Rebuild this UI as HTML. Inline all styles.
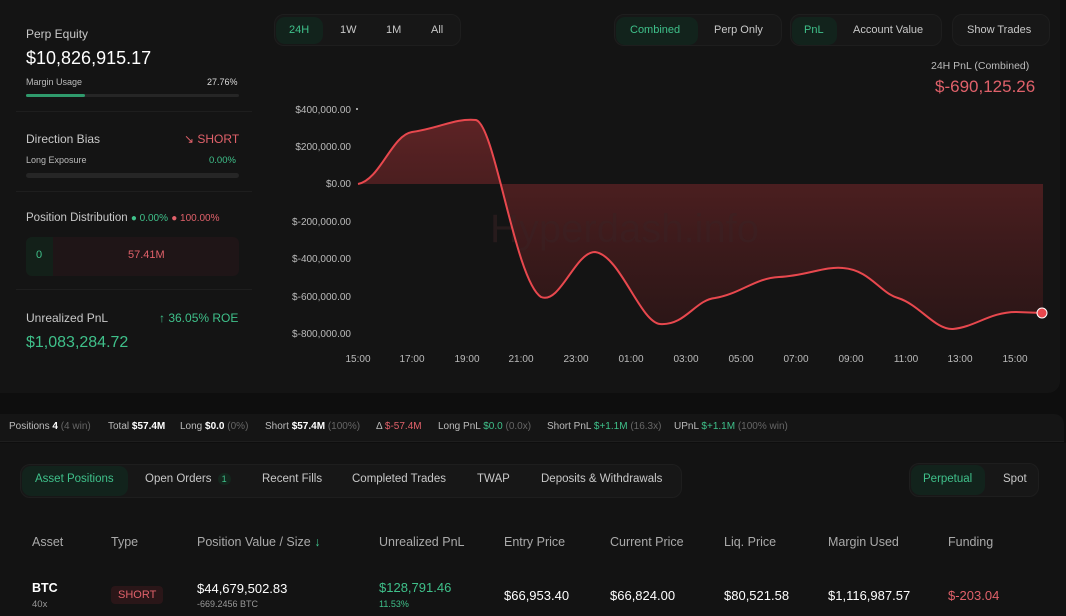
<!DOCTYPE html>
<html><head><meta charset="utf-8"><style>
*{box-sizing:border-box;margin:0;padding:0}
body{width:1066px;height:616px;overflow:hidden;background:#0e0e0e;font-family:"Liberation Sans",sans-serif;color:#e8e8e8;position:relative}
.a{position:absolute;white-space:nowrap}
.g{color:#3fc08a}.r{color:#e0616a}.m{color:#666}
.card{position:absolute;left:0;top:0;width:1060px;height:393px;background:#141414;border-radius:0 0 12px 0}
.seg{position:absolute;height:32px;background:#171717;border:1px solid #1e1e1e;border-radius:10px}
.on{position:absolute;background:#12231c;border-radius:9px;color:#3fc08a}
.lbl{font-size:11px;color:#c8c8c8}
.sb{position:absolute;top:421px;font-size:10px;color:#bbb;white-space:nowrap}
.sb b{color:#fff}
</style></head><body>
<div class="card"></div>
<div class="a" style="left:26px;top:27px;font-size:12px;color:#c8c8c8">Perp Equity</div>
<div class="a" style="left:26px;top:48px;font-size:18px;color:#fff">$10,826,915.17</div>
<div class="a" style="left:26px;top:77px;font-size:9px;color:#bbb">Margin Usage</div>
<div class="a" style="left:207px;top:77px;font-size:9px;color:#ddd">27.76%</div>
<div class="a" style="left:26px;top:94px;width:213px;height:3px;background:#262626;border-radius:2px"></div>
<div class="a" style="left:26px;top:94px;width:59px;height:3px;background:#2f9a6c;border-radius:2px"></div>
<div class="a" style="left:16px;top:111px;width:236px;height:1px;background:#1e1e1e"></div>
<div class="a" style="left:26px;top:132px;font-size:12px;color:#c8c8c8">Direction Bias</div>
<div class="a r" style="left:184px;top:132px;font-size:12px">↘ SHORT</div>
<div class="a" style="left:26px;top:155px;font-size:9px;color:#bbb">Long Exposure</div>
<div class="a g" style="left:209px;top:155px;font-size:9.5px">0.00%</div>
<div class="a" style="left:26px;top:173px;width:213px;height:5px;background:#262626;border-radius:3px"></div>
<div class="a" style="left:16px;top:191px;width:236px;height:1px;background:#1e1e1e"></div>
<div class="a" style="left:26px;top:212px;font-size:11.5px;color:#c8c8c8">Position Distribution <span class="g" style="font-size:10px">● 0.00%</span> <span class="r" style="font-size:10px">● 100.00%</span></div>
<div class="a" style="left:26px;top:237px;width:213px;height:39px;background:#1f1517;border-radius:6px;overflow:hidden">
<div style="position:absolute;left:0;top:0;width:27px;height:39px;background:#132019"></div>
<div class="a g" style="left:10px;top:12px;font-size:11px">0</div>
<div class="a r" style="left:102px;top:12px;font-size:11px">57.41M</div></div>
<div class="a" style="left:16px;top:289px;width:236px;height:1px;background:#1e1e1e"></div>
<div class="a" style="left:26px;top:311px;font-size:12px;color:#c8c8c8">Unrealized PnL</div>
<div class="a g" style="left:159px;top:311px;font-size:12px">↑ 36.05% ROE</div>
<div class="a g" style="left:26px;top:334px;font-size:16px">$1,083,284.72</div>
<div class="seg" style="left:274px;top:14px;width:187px"></div>
<div class="on" style="left:276px;top:17px;width:47px;height:27px"></div>
<div class="a g" style="left:289px;top:24px;font-size:11px">24H</div>
<div class="a lbl" style="left:340px;top:24px">1W</div>
<div class="a lbl" style="left:386px;top:24px">1M</div>
<div class="a lbl" style="left:431px;top:24px">All</div>
<div class="seg" style="left:614px;top:14px;width:168px"></div>
<div class="on" style="left:616px;top:17px;width:82px;height:28px"></div>
<div class="a g" style="left:630px;top:24px;font-size:11px">Combined</div>
<div class="a lbl" style="left:714px;top:24px">Perp Only</div>
<div class="seg" style="left:790px;top:14px;width:152px"></div>
<div class="on" style="left:792px;top:17px;width:45px;height:28px"></div>
<div class="a g" style="left:804px;top:24px;font-size:11px">PnL</div>
<div class="a lbl" style="left:853px;top:24px">Account Value</div>
<div class="seg" style="left:952px;top:14px;width:98px"></div>
<div class="a lbl" style="left:967px;top:24px">Show Trades</div>
<div class="a" style="left:931px;top:60px;font-size:10.5px;color:#bbb">24H PnL (Combined)</div>
<div class="a r" style="left:935px;top:77px;font-size:17px">$-690,125.26</div>
<svg class="a" style="left:0;top:0" width="1066" height="393">
<defs><linearGradient id="gr" x1="0" y1="0" x2="0" y2="1"><stop offset="0" stop-color="#6a2628" stop-opacity=".85"/><stop offset="1" stop-color="#3a1718" stop-opacity=".6"/></linearGradient></defs>
<path d="M358,184 C380,180 392,135 412,132 C440,128 455,118 476,120 C495,125 515,280 541,297 C560,305 575,252 595,252 C620,255 640,322 660,324 C685,326 695,300 715,298 C740,294 755,278 779,277 C805,276 825,266 843,268 C870,270 880,293 898,298 C920,305 935,330 953,329 C975,327 990,312 1016,312 L1043,313 L1043,184 Z" fill="url(#gr)"/>
<text x="490" y="242" font-size="40" fill="#3a2223" fill-opacity=".5" font-family="Liberation Sans">Hyperdash.info</text>
<path d="M358,184 C380,180 392,135 412,132 C440,128 455,118 476,120 C495,125 515,280 541,297 C560,305 575,252 595,252 C620,255 640,322 660,324 C685,326 695,300 715,298 C740,294 755,278 779,277 C805,276 825,266 843,268 C870,270 880,293 898,298 C920,305 935,330 953,329 C975,327 990,312 1016,312 L1043,313" fill="none" stroke="#e8484e" stroke-width="2"/>
<circle cx="1042" cy="313" r="5" fill="#e8484e" stroke="#fff" stroke-width="1"/>
<circle cx="357" cy="109" r="1" fill="#ccc"/>
<g font-size="10" fill="#bbb" font-family="Liberation Sans" text-anchor="end">
<text x="351" y="113">$400,000.00</text><text x="351" y="150">$200,000.00</text><text x="351" y="187">$0.00</text>
<text x="351" y="225">$-200,000.00</text><text x="351" y="262">$-400,000.00</text><text x="351" y="300">$-600,000.00</text><text x="351" y="337">$-800,000.00</text></g>
<g font-size="10" fill="#bbb" font-family="Liberation Sans" text-anchor="middle">
<text x="358" y="362">15:00</text><text x="412" y="362">17:00</text><text x="467" y="362">19:00</text><text x="521" y="362">21:00</text><text x="576" y="362">23:00</text><text x="631" y="362">01:00</text><text x="686" y="362">03:00</text><text x="741" y="362">05:00</text><text x="796" y="362">07:00</text><text x="851" y="362">09:00</text><text x="906" y="362">11:00</text><text x="960" y="362">13:00</text><text x="1015" y="362">15:00</text></g>
</svg>
<div class="a" style="left:0;top:414px;width:1064px;height:28px;background:#151515;border-radius:0 10px 0 0;border-bottom:1px solid #1e1e1e"></div>
<div class="sb" style="left:9px">Positions <b>4</b> <span class="m">(4 win)</span></div>
<div class="sb" style="left:108px">Total <b>$57.4M</b></div>
<div class="sb" style="left:180px">Long <b>$0.0</b> <span class="m">(0%)</span></div>
<div class="sb" style="left:265px">Short <b>$57.4M</b> <span class="m">(100%)</span></div>
<div class="sb" style="left:376px">Δ <span class="r">$-57.4M</span></div>
<div class="sb" style="left:438px">Long PnL <span class="g">$0.0</span> <span class="m">(0.0x)</span></div>
<div class="sb" style="left:547px">Short PnL <span class="g">$+1.1M</span> <span class="m">(16.3x)</span></div>
<div class="sb" style="left:674px">UPnL <span class="g">$+1.1M</span> <span class="m">(100% win)</span></div>
<div class="a" style="left:0;top:443px;width:1066px;height:173px;background:#131313"></div>
<div class="seg" style="left:20px;top:464px;width:662px;height:34px"></div>
<div class="on" style="left:22px;top:466px;width:106px;height:30px"></div>
<div class="a g" style="left:35px;top:473px;font-size:11.5px">Asset Positions</div>
<div class="a lbl" style="left:145px;top:473px;font-size:11.5px">Open Orders <span style="display:inline-block;background:#14261d;color:#3fc08a;border-radius:6px;padding:1px 4px;font-size:9px;margin-left:3px">1</span></div>
<div class="a lbl" style="left:262px;top:473px;font-size:11.5px">Recent Fills</div>
<div class="a lbl" style="left:352px;top:473px;font-size:11.5px">Completed Trades</div>
<div class="a lbl" style="left:477px;top:473px;font-size:11.5px">TWAP</div>
<div class="a lbl" style="left:541px;top:473px;font-size:11.5px">Deposits &amp; Withdrawals</div>
<div class="seg" style="left:909px;top:463px;width:130px;height:34px"></div>
<div class="on" style="left:911px;top:465px;width:74px;height:30px"></div>
<div class="a g" style="left:923px;top:473px;font-size:11.5px">Perpetual</div>
<div class="a lbl" style="left:1003px;top:473px;font-size:11.5px">Spot</div>
<div class="a" style="top:535px;left:0;font-size:12.5px;color:#aaa;width:1066px">
<span class="a" style="left:32px">Asset</span><span class="a" style="left:111px">Type</span><span class="a" style="left:197px">Position Value / Size <span class="g">↓</span></span><span class="a" style="left:379px">Unrealized PnL</span><span class="a" style="left:504px">Entry Price</span><span class="a" style="left:610px">Current Price</span><span class="a" style="left:724px">Liq. Price</span><span class="a" style="left:828px">Margin Used</span><span class="a" style="left:948px">Funding</span></div>
<div class="a" style="left:32px;top:581px;font-size:12.5px;color:#fff;font-weight:bold">BTC</div>
<div class="a" style="left:32px;top:599px;font-size:9.5px;color:#999">40x</div>
<div class="a r" style="left:111px;top:586px;background:#2a1618;padding:3px 7px;border-radius:4px;font-size:11px">SHORT</div>
<div class="a" style="left:197px;top:581px;font-size:13px;color:#fff">$44,679,502.83</div>
<div class="a" style="left:197px;top:599px;font-size:9px;color:#999">-669.2456 BTC</div>
<div class="a g" style="left:379px;top:580px;font-size:13px">$128,791.46</div>
<div class="a g" style="left:379px;top:599px;font-size:9px">11.53%</div>
<div class="a" style="left:504px;top:588px;font-size:13px;color:#fff">$66,953.40</div>
<div class="a" style="left:610px;top:588px;font-size:13px;color:#fff">$66,824.00</div>
<div class="a" style="left:724px;top:588px;font-size:13px;color:#fff">$80,521.58</div>
<div class="a" style="left:828px;top:588px;font-size:13px;color:#fff">$1,116,987.57</div>
<div class="a r" style="left:948px;top:588px;font-size:13px">$-203.04</div>
</body></html>
